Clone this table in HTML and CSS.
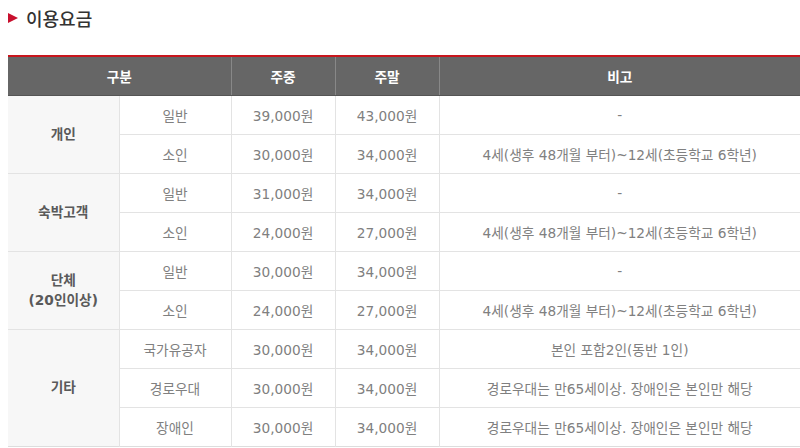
FILE: index.html
```html
<!DOCTYPE html>
<html lang="ko">
<head>
<meta charset="utf-8">
<link rel="stylesheet" href="styles.css">
</head>
<body>
<h2 class="title"><span class="tri"></span>이용요금</h2>
<table class="fee">
  <colgroup>
    <col class="c1"><col class="c2"><col class="c3"><col class="c4"><col class="c5">
  </colgroup>
  <thead>
    <tr><th colspan="2">구분</th><th>주중</th><th>주말</th><th>비고</th></tr>
  </thead>
  <tbody>
    <tr><th class="grp" rowspan="2">개인</th><td>일반</td><td>39,000원</td><td>43,000원</td><td>-</td></tr>
    <tr><td>소인</td><td>30,000원</td><td>34,000원</td><td>4세(생후 48개월 부터)~12세(초등학교 6학년)</td></tr>
    <tr><th class="grp" rowspan="2">숙박고객</th><td>일반</td><td>31,000원</td><td>34,000원</td><td>-</td></tr>
    <tr><td>소인</td><td>24,000원</td><td>27,000원</td><td>4세(생후 48개월 부터)~12세(초등학교 6학년)</td></tr>
    <tr><th class="grp" rowspan="2">단체<br>(20인이상)</th><td>일반</td><td>30,000원</td><td>34,000원</td><td>-</td></tr>
    <tr><td>소인</td><td>24,000원</td><td>27,000원</td><td>4세(생후 48개월 부터)~12세(초등학교 6학년)</td></tr>
    <tr><th class="grp" rowspan="3">기타</th><td>국가유공자</td><td>30,000원</td><td>34,000원</td><td>본인 포함2인(동반 1인)</td></tr>
    <tr><td>경로우대</td><td>30,000원</td><td>34,000원</td><td>경로우대는 만65세이상. 장애인은 본인만 해당</td></tr>
    <tr><td>장애인</td><td>30,000원</td><td>34,000원</td><td>경로우대는 만65세이상. 장애인은 본인만 해당</td></tr>
  </tbody>
</table>
</body>
</html>
```

FILE: styles.css
```css
html, body {
  margin: 0;
  padding: 0;
  background: #fff;
}
body {
  padding: 0 0 0 8px;
  font-family: "DejaVu Sans", "Noto Sans CJK KR", sans-serif;
  color: #808080;
}
.title {
  margin: 0;
  height: 36px;
  display: flex;
  align-items: center;
  gap: 8px;
  font-size: 18px;
  font-weight: 500;
  color: #333;
}
.tri {
  width: 0;
  height: 0;
  border-left: 10px solid #c8102e;
  border-top: 5px solid transparent;
  border-bottom: 5px solid transparent;
}
.fee {
  margin-top: 19px;
  width: 792px;
  border-collapse: collapse;
  table-layout: fixed;
  border-top: 2px solid #c8161d;
  border-bottom: 1px solid #ddd;
  font-size: 13.7px;
}
.c1 { width: 111px; }
.c2 { width: 112px; }
.c3 { width: 104px; }
.c4 { width: 104px; }
.c5 { width: 361px; }
.fee thead th {
  background: #666;
  color: #fff;
  font-weight: 700;
  height: 38px;
  padding: 0;
  border-left: 1px solid #888;
  border-bottom: 1px solid #555;
}
.fee thead th:first-child {
  border-left: 0;
}
.fee td, .fee .grp {
  height: 38px;
  padding: 0;
  text-align: center;
  border-top: 1px solid #e3e3e3;
  border-left: 1px solid #e3e3e3;
  font-weight: 400;
  color: #808080;
}
.fee .grp {
  background: #f7f7f7;
  border-left: 0;
  font-weight: 700;
  color: #5a5a5a;
  line-height: 1.45;
}
.fee tbody tr:first-child td, .fee tbody tr:first-child .grp {
  border-top: 0;
}
```
